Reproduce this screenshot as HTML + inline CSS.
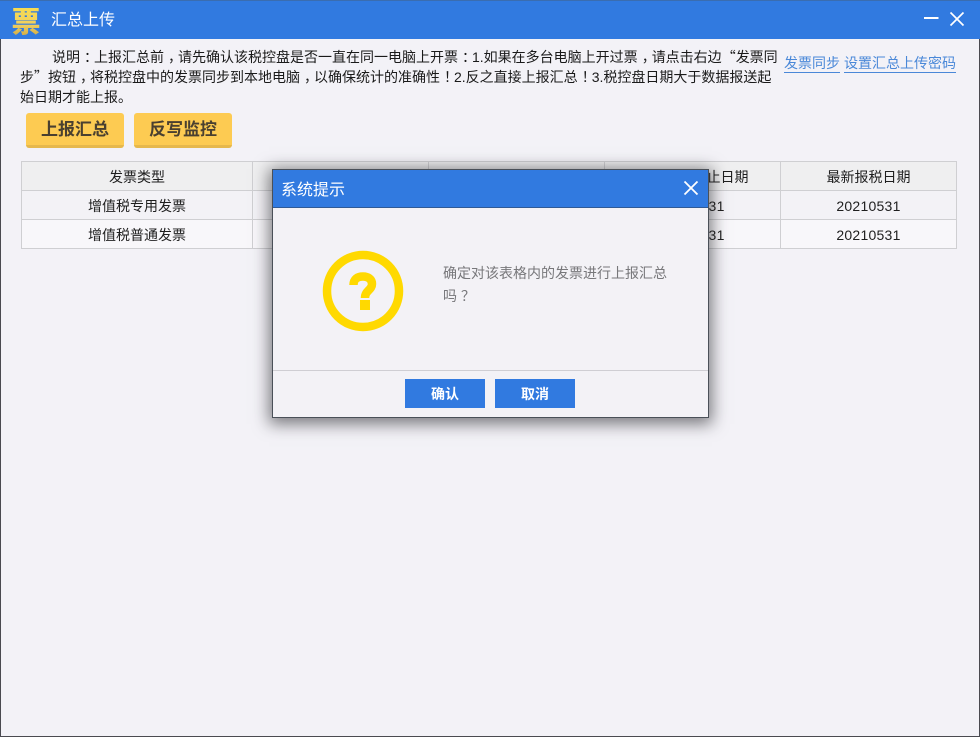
<!DOCTYPE html>
<html lang="zh">
<head>
<meta charset="utf-8">
<style>
html,body{margin:0;padding:0;width:980px;height:737px;overflow:hidden;background:#f3f2f7}
body{position:relative;font-family:"Liberation Sans","Noto Sans CJK SC",sans-serif;font-size:14px;color:#222}
div{position:absolute;box-sizing:border-box;white-space:nowrap}
.win{left:0;top:0;width:980px;height:737px;border:1px solid #4a4a50;border-top:0}
.line{line-height:20px;height:20px;color:#1a1a1a}
.btn{height:35px;width:98px;top:113px;background:#fdcb52;border-bottom:3px solid #e6b84c;border-radius:3px;text-align:center;font-size:17px;font-weight:700;line-height:33px;color:#4a4030}
.link{top:54px;color:#4a88d8;border-bottom:1px solid #4a88d8;line-height:18px;height:19px}
.cell{height:29px;line-height:31px;text-align:center;border-right:1px solid #cfcfd2;border-bottom:1px solid #cfcfd2;color:#1e1e1e}
.h{background:#efeff0}
.b{background:#f8f7fa}
.a{background:#f3f2f6}
.n{letter-spacing:.25px}
.p{position:relative;left:4px}
.q{font-family:"Noto Sans CJK SC",sans-serif}
</style>
</head>
<body>
<div class="win"></div>
<div style="left:0;top:0;width:980px;height:39px;background:#317ae0;border-top:1px solid #3a6db0"></div>
<div style="left:1px;top:39px;width:978px;height:697px;background:#f3f2f7"></div>

<div style="left:11px;top:7px;width:30px;height:32px;font-size:29px;line-height:32px;font-weight:900;text-align:center;color:#f2cf55;background:linear-gradient(#f8dc50,#f0d060 55%,#c9a23c);-webkit-background-clip:text;background-clip:text;-webkit-text-fill-color:transparent">票</div>
<div style="left:51px;top:10px;font-size:16px;line-height:22px;color:#fff">汇总上传</div>
<svg style="position:absolute;left:920px;top:9px" width="50" height="20" viewBox="0 0 50 20">
<path d="M4 9H18.500" stroke="#fff" stroke-width="2" fill="none"/>
<path d="M30.500 3.500L43.500 16.500M43.500 3.500L30.500 16.500" stroke="#fff" stroke-width="1.700" fill="none"/>
</svg>

<div class="line" style="left:52px;top:47px">说明<span class="p">：</span>上报汇总前<span class="p">，</span>请先确认该税控盘是否一直在同一电脑上开票<span class="p">：</span>1.如果在多台电脑上开过票<span class="p">，</span>请点击右边<span class="q">“</span>发票同</div>
<div class="line" style="left:20px;top:67px">步<span class="q">”</span>按钮<span class="p">，</span>将税控盘中的发票同步到本地电脑<span class="p">，</span>以确保统计的准确性<span class="p">！</span>2.反之直接上报汇总<span class="p">！</span>3.税控盘日期大于数据报送起</div>
<div class="line" style="left:20px;top:87px">始日期才能上报。</div>

<div class="link" style="left:784px">发票同步</div>
<div class="link" style="left:844px">设置汇总上传密码</div>

<div class="btn" style="left:26px">上报汇总</div>
<div class="btn" style="left:134px">反写监控</div>

<!-- table -->
<div style="left:21px;top:161px;width:936px;height:1px;background:#cfcfd2"></div>
<div style="left:21px;top:161px;width:1px;height:88px;background:#cfcfd2"></div>
<div class="cell h" style="left:22px;top:162px;width:231px">发票类型</div>
<div class="cell h" style="left:253px;top:162px;width:176px"></div>
<div class="cell h" style="left:429px;top:162px;width:176px"></div>
<div class="cell h" style="left:605px;top:162px;width:176px">汇总上传截止日期</div>
<div class="cell h" style="left:781px;top:162px;width:176px">最新报税日期</div>

<div class="cell a" style="left:22px;top:191px;width:231px">增值税专用发票</div>
<div class="cell a" style="left:253px;top:191px;width:176px"></div>
<div class="cell a" style="left:429px;top:191px;width:176px"></div>
<div class="cell a n" style="left:605px;top:191px;width:176px">20210531</div>
<div class="cell a n" style="left:781px;top:191px;width:176px">20210531</div>

<div class="cell b" style="left:22px;top:220px;width:231px">增值税普通发票</div>
<div class="cell b" style="left:253px;top:220px;width:176px"></div>
<div class="cell b" style="left:429px;top:220px;width:176px"></div>
<div class="cell b n" style="left:605px;top:220px;width:176px">20210531</div>
<div class="cell b n" style="left:781px;top:220px;width:176px">20210531</div>

<!-- dialog -->
<div style="left:272px;top:169px;width:437px;height:249px;background:#f3f2f6;border:1px solid #4a5058;box-shadow:0 3px 15px 3px rgba(40,40,45,.6)"></div>
<div style="left:273px;top:170px;width:435px;height:38px;background:#317ae0;border-bottom:1px solid #2f5a96"></div>
<div style="left:281px;top:180px;font-size:16px;line-height:22px;color:#fff">系统提示</div>
<svg style="position:absolute;left:680px;top:177px" width="22" height="22" viewBox="0 0 22 22">
<path d="M4.500 4.500L17.500 17.500M17.500 4.500L4.500 17.500" stroke="#fff" stroke-width="1.800" fill="none"/>
</svg>

<svg style="position:absolute;left:320px;top:248px" width="86" height="86" viewBox="0 0 86 86">
<circle cx="43" cy="43" r="36" fill="none" stroke="#ffd900" stroke-width="8.500"/>
<path d="M33.500 37C33.500 31 37.500 28.500 43 28.500C48 28.500 52 31 52 36C52 42 45 42.500 45 50" fill="none" stroke="#ffd900" stroke-width="8.500"/>
<rect x="40" y="52" width="10" height="10" fill="#ffd900"/>
</svg>

<div style="left:443px;top:263px;line-height:20px;font-size:14px;color:#77777a">确定对该表格内的发票进行上报汇总</div>
<div style="left:443px;top:286px;line-height:20px;font-size:14px;color:#77777a">吗<span class="p">？</span></div>

<div style="left:273px;top:370px;width:435px;height:1px;background:#cfced3"></div>
<div style="left:405px;top:379px;width:80px;height:29px;background:#317ae0;color:#fff;font-weight:700;text-align:center;line-height:30px;font-size:14px">确认</div>
<div style="left:495px;top:379px;width:80px;height:29px;background:#317ae0;color:#fff;font-weight:700;text-align:center;line-height:30px;font-size:14px">取消</div>
</body>
</html>
